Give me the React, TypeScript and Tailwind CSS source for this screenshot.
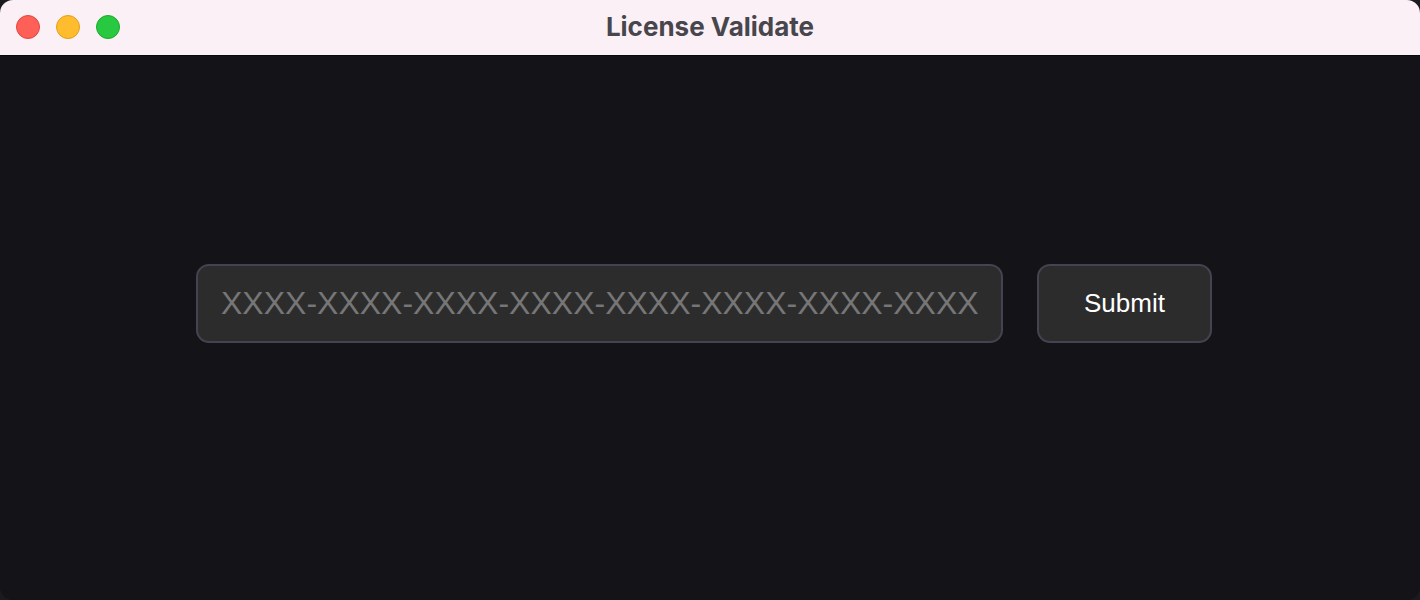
import React from "react";

export default function App() {
  return (
    <div className="w-[1420px] h-[600px] bg-[#1b1b1f] overflow-hidden">
      <div className="w-full h-full rounded-[13px] overflow-hidden flex flex-col bg-[#131318]">
        <div className="relative h-[56px] shrink-0 bg-[#fbf0f6] flex items-center border-b border-[#0a0a0c]">
          <div className="flex items-center gap-[16px] pl-[16px] pb-[1px]">
            <span className="w-[24px] h-[24px] rounded-full bg-[#fe5f57] border border-[#e2463f]" />
            <span className="w-[24px] h-[24px] rounded-full bg-[#febc2e] border border-[#e1a116]" />
            <span className="w-[24px] h-[24px] rounded-full bg-[#28c840] border border-[#1aab29]" />
          </div>
          <div className="absolute inset-0 flex items-center justify-center pointer-events-none pb-[3px]">
            <span className="font-['Inter',sans-serif] font-bold text-[26px] text-[#48464d]">
              License Validate
            </span>
          </div>
        </div>
        <div className="flex-1 flex justify-center pt-[208px] pr-[12px]">
          <div className="flex items-start gap-[34px]">
            <input
              className="w-[807px] h-[79px] rounded-[13px] bg-[#2c2c2c] border-2 border-[#454351] px-[23px] text-[32px] text-white placeholder:text-[#767676] outline-none font-['Liberation_Sans',Arial,sans-serif]"
              placeholder="XXXX-XXXX-XXXX-XXXX-XXXX-XXXX-XXXX-XXXX"
            />
            <button className="w-[175px] h-[79px] rounded-[13px] bg-[#2c2c2c] border-2 border-[#454351] text-[26px] text-white font-['Liberation_Sans',Arial,sans-serif]">
              Submit
            </button>
          </div>
        </div>
      </div>
    </div>
  );
}
